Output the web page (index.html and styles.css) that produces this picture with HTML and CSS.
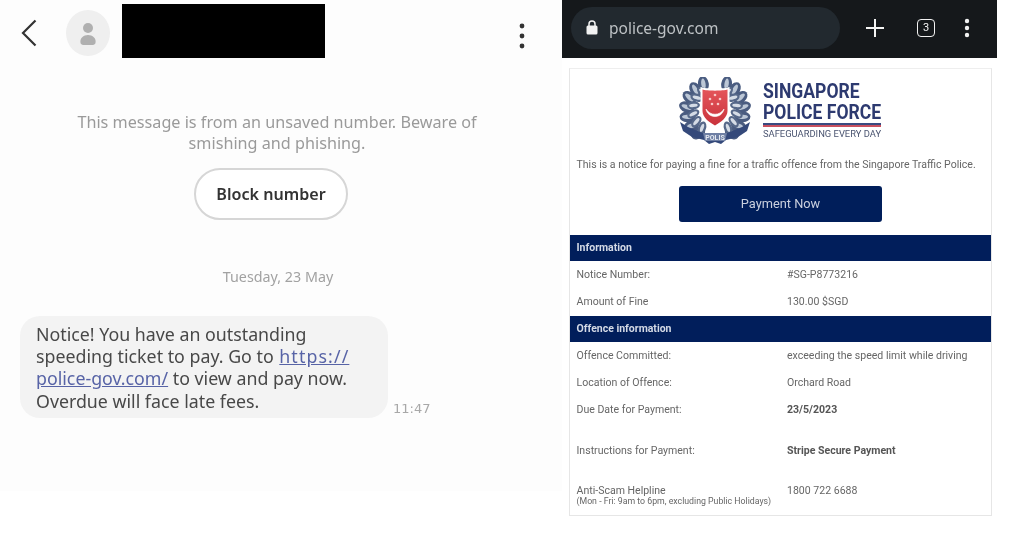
FILE: index.html
```html
<!DOCTYPE html>
<html lang="en">
<head>
<meta charset="utf-8">
<title>Scam SMS and fake police site</title>
<link rel="stylesheet" href="styles.css">
</head>
<body>
<main class="page">
  <section class="sms">
    <header class="sms-head">
      <svg class="back" viewBox="0 0 16 28" aria-hidden="true"><path d="M14.500 1.500 2 14l12.500 12.500" fill="none" stroke="#333" stroke-width="2.200"/></svg>
      <div class="avatar">
        <svg viewBox="0 0 44 46" width="44" height="46" aria-hidden="true"><circle cx="22" cy="18" r="5" fill="#b0b0b0"/><path d="M14.500 33c-1-5 3-8 7.500-8s8.500 3 7.500 8c-.4 1.600-2 2-3.500 2h-8c-1.500 0-3.100-.4-3.500-2z" fill="#b0b0b0"/></svg>
      </div>
      <div class="redact"></div>
      <svg class="sms-more" viewBox="0 0 8 28" aria-hidden="true"><circle cx="4" cy="4" r="2.400"/><circle cx="4" cy="14" r="2.400"/><circle cx="4" cy="24" r="2.400"/></svg>
    </header>
    <p class="warn">This message is from an unsaved number. Beware of<br>smishing and phishing.</p>
    <div class="block">Block number</div>
    <p class="date">Tuesday, 23 May</p>
    <div class="thread">
      <div class="bubble">Notice! You have an outstanding<br>speeding ticket to pay. Go to <a class="link link-wide">https://</a><br><a class="link">police-gov.com/</a> to view and pay now.<br>Overdue will face late fees.</div>
      <span class="time">11:47</span>
    </div>
  </section>

  <section class="web">
    <header class="chrome">
      <div class="pill">
        <svg class="lock" viewBox="0 0 12 15" aria-hidden="true"><path d="M3 6V4a3 3 0 0 1 6 0v2" fill="none" stroke="#f2f2f2" stroke-width="1.500"/><rect x="0.500" y="5.500" width="11" height="9" rx="1.500" fill="#f2f2f2"/></svg>
        <span class="url">police-gov.com</span>
      </div>
      <svg class="plus" viewBox="0 0 18 18" aria-hidden="true"><path d="M9 0v18M0 9h18" stroke="#f4f4f4" stroke-width="2"/></svg>
      <div class="tabs">3</div>
      <svg class="chrome-more" viewBox="0 0 6 20" aria-hidden="true"><circle cx="3" cy="3" r="2.200"/><circle cx="3" cy="10" r="2.200"/><circle cx="3" cy="17" r="2.200"/></svg>
    </header>

    <article class="card">
      <div class="brand">
        <svg class="crest" viewBox="0 0 72 68" aria-hidden="true">
          <defs>
            <linearGradient id="shield" x1="0" y1="0" x2="0" y2="1"><stop offset="0" stop-color="#e4555a"/><stop offset="1" stop-color="#c9323c"/></linearGradient>
            <g id="leaf">
              <ellipse cx="36" cy="4.500" rx="5.400" ry="7.800" fill="#4a5c80" transform="rotate(16 36 4.500)"/>
              <ellipse cx="36" cy="4.500" rx="2.200" ry="5.400" fill="#bcc7d6" transform="rotate(16 36 4.500)"/>
            </g>
            <g id="inner">
              <ellipse cx="36" cy="11" rx="4" ry="6.500" fill="#566889" transform="rotate(-18 36 11)"/>
              <ellipse cx="36" cy="11" rx="1.700" ry="4.300" fill="#d5dce6" transform="rotate(-18 36 11)"/>
            </g>
          </defs>
          <g>
            <use href="#leaf" transform="rotate(-24 36 33)"/><use href="#leaf" transform="rotate(-44 36 33)"/><use href="#leaf" transform="rotate(-64 36 33)"/><use href="#leaf" transform="rotate(-84 36 33)"/><use href="#leaf" transform="rotate(-104 36 33)"/><use href="#leaf" transform="rotate(-124 36 33)"/><use href="#leaf" transform="rotate(-144 36 33)"/>
            <use href="#inner" transform="rotate(-34 36 33)"/><use href="#inner" transform="rotate(-56 36 33)"/><use href="#inner" transform="rotate(-78 36 33)"/><use href="#inner" transform="rotate(-100 36 33)"/><use href="#inner" transform="rotate(-122 36 33)"/><use href="#inner" transform="rotate(-144 36 33)"/>
          </g>
          <g transform="matrix(-1 0 0 1 72 0)">
            <use href="#leaf" transform="rotate(-24 36 33)"/><use href="#leaf" transform="rotate(-44 36 33)"/><use href="#leaf" transform="rotate(-64 36 33)"/><use href="#leaf" transform="rotate(-84 36 33)"/><use href="#leaf" transform="rotate(-104 36 33)"/><use href="#leaf" transform="rotate(-124 36 33)"/><use href="#leaf" transform="rotate(-144 36 33)"/>
            <use href="#inner" transform="rotate(-34 36 33)"/><use href="#inner" transform="rotate(-56 36 33)"/><use href="#inner" transform="rotate(-78 36 33)"/><use href="#inner" transform="rotate(-100 36 33)"/><use href="#inner" transform="rotate(-122 36 33)"/><use href="#inner" transform="rotate(-144 36 33)"/>
          </g>
          <path d="M21.500 10c5 2 24 2 29 0v24c0 7-7 12-14.500 16.500C28.500 46 21.500 41 21.500 34z" fill="#fff"/>
          <path d="M23.500 12.500c4 1.500 21 1.500 25 0V34c0 6-6 11-12.500 14.500C29.500 45 23.500 40 23.500 34z" fill="url(#shield)"/>
          <path d="M27 32c4 7 14 7 18 0-2 10-16 10-18 0z" fill="#fff" stroke="#fff" stroke-width=".6"/>
          <g fill="#f7c9c9"><circle cx="36" cy="18" r="1.300"/><circle cx="31" cy="22" r="1.300"/><circle cx="41" cy="22" r="1.300"/><circle cx="33" cy="27" r="1.300"/><circle cx="39" cy="27" r="1.300"/></g>
          <path d="M1 45l8 5 12 5 6 2h18l6-2 12-5 8-5-3 9-9 6-12 3-5 4-6-2-6 2-5-4-12-3-9-6z" fill="#34497a"/>
          <path d="M24 56h24l-2 8H26z" fill="#6f80a4"/>
          <text class="polis" x="36" y="63" text-anchor="middle">POLIS</text>
        </svg>
        <div class="wordmark">
          <div class="wm-1">SINGAPORE</div>
          <div class="wm-2">POLICE FORCE</div>
          <div class="wm-rule"></div>
          <div class="wm-3">SAFEGUARDING EVERY DAY</div>
        </div>
      </div>
      <p class="intro">This is a notice for paying a fine for a traffic offence from the Singapore Traffic Police.</p>
      <div class="pay">Payment Now</div>

      <h2 class="band">Information</h2>
      <div class="row"><span>Notice Number:</span><span>#SG-P8773216</span></div>
      <div class="row"><span>Amount of Fine</span><span>130.00 $SGD</span></div>
      <h2 class="band">Offence information</h2>
      <div class="row"><span>Offence Committed:</span><span>exceeding the speed limit while driving</span></div>
      <div class="row"><span>Location of Offence:</span><span>Orchard Road</span></div>
      <div class="row"><span>Due Date for Payment:</span><span class="strong">23/5/2023</span></div>
      <div class="row row-tall"><span>Instructions for Payment:</span><span class="strong">Stripe Secure Payment</span></div>
      <div class="row row-help">
        <div>Anti-Scam Helpline<small>(Mon - Fri: 9am to 6pm, excluding Public Holidays)</small></div>
        <span>1800 722 6688</span>
      </div>
    </article>
  </section>
</main>
</body>
</html>
```
FILE: styles.css
```css
* { box-sizing: border-box; }
html, body { margin: 0; height: 100%; background: #fff; }
body { overflow: hidden; }
p, h2 { margin: 0; }

.page { display: flex; width: 1024px; height: 536px; filter: blur(.35px); }

/* Left: SMS */
.sms {
  width: 562px;
  height: 491px;
  background: #fdfdfd;
  display: flex;
  flex-direction: column;
  font-family: "Noto Sans", sans-serif;
}
.sms-head { display: flex; align-items: flex-start; height: 58px; margin-top: 4px; }
.back { width: 16px; height: 28px; margin: 15px 0 0 21px; }
.avatar {
  width: 44px; height: 46px; margin: 6px 0 0 29px;
  border-radius: 50%; background: #efefef;
}
.avatar svg { display: block; }
.redact { width: 203px; height: 54px; margin-left: 12px; background: #000; }
.sms-more { width: 8px; height: 28px; margin: 18px 0 0 193px; fill: #333; }

.warn {
  width: 420px;
  margin: 50px 0 0 67px;
  white-space: nowrap;
  text-align: center;
  font-size: 16.200px;
  line-height: 21px;
  color: #9a9a9a;
}
.block {
  align-self: flex-start;
  margin: 14px 0 0 194px;
  width: 154px; height: 52px;
  border: 2px solid #d6d6d6;
  border-radius: 26px;
  background: #fff;
  display: flex; align-items: center; justify-content: center;
  font-size: 16.100px;
  font-weight: 600;
  color: #333;
}
.date {
  margin: 47px 0 0 200px;
  width: 156px;
  text-align: center;
  font-size: 14.300px;
  line-height: 20px;
  color: #a2a2a2;
}
.thread { display: flex; align-items: flex-end; margin: 29px 0 0 20px; }
.bubble {
  width: 368px; height: 102px;
  padding: 7px 0 0 16px;
  border-radius: 20px;
  background: #f3f3f3;
  font-size: 17.800px;
  line-height: 22.200px;
  color: #484848;
  white-space: nowrap;
}
.link { color: #5763a6; text-decoration: underline; }
.link-wide { margin-left: 1px; letter-spacing: 1.100px; }
.time { margin: 0 0 0 5px; font-size: 13px; line-height: 18px; color: #a8a8a8; font-family: "DejaVu Sans", sans-serif; }

/* Right: browser */
.web { width: 435px; font-family: Roboto, sans-serif; }
.chrome {
  display: flex; align-items: center;
  height: 58px;
  background: #15181b;
  padding-left: 9px;
}
.pill {
  display: flex; align-items: center;
  width: 269px; height: 42px;
  border-radius: 21px;
  background: #22292f;
  margin-top: -3px;
}
.lock { width: 12px; height: 15px; margin-left: 15px; }
.url {
  margin-left: 11px;
  font-family: "Noto Sans", sans-serif;
  font-size: 15.500px;
  color: #bdc1c4;
}
.plus { width: 18px; height: 18px; margin: -3px 0 0 26px; }
.tabs {
  width: 18px; height: 18px; margin: -3px 0 0 33px;
  border: 1.500px solid #f2f2f2; border-radius: 4px;
  display: flex; align-items: center; justify-content: center;
  font-size: 11px; color: #f2f2f2;
}
.chrome-more { width: 6px; height: 20px; margin: -3px 0 0 29px; fill: #f2f2f2; }

.card {
  width: 423px; height: 448px;
  margin: 10px 0 0 7px;
  border: 1px solid #e6e6e6;
  border-top-color: #eee;
  background: #fff;
  font-size: 10.550px;
  color: #666;
}
.brand { display: flex; align-items: flex-start; height: 89px; padding: 8px 0 0 109px; }
.crest { width: 72px; height: 68px; flex: none; }
.polis { font: 700 7px Roboto, sans-serif; fill: #e6eaf2; }
.wordmark { margin-left: 12px; color: #2d3a70; }
.wm-1, .wm-2 {
  font-family: Roboto, sans-serif;
  font-weight: 700;
  font-size: 21px;
  line-height: 21px;
  white-space: nowrap;
  transform: scaleX(.836);
  transform-origin: left center;
}
.wm-1 { margin-top: 4px; }
.wm-rule { height: 3.500px; background: linear-gradient(#3a4a80 50%, #c8505f 50%); width: 118px; }
.wm-3 { font-size: 9.400px; line-height: 13px; color: #4a5470; white-space: nowrap; }

.intro { padding-left: 6.500px; line-height: 13px; color: #666; white-space: nowrap; }
.pay {
  width: 203px; height: 36px; margin: 15px 0 0 109px;
  background: #001e5a; border-radius: 3px;
  color: #c9d0de; font-size: 12.800px;
  padding-bottom: 2px;
  display: flex; align-items: center; justify-content: center;
}
.band {
  height: 26px; margin-top: 13px;
  padding-left: 6.500px;
  background: #011e5b;
  color: #d4dae6;
  font-size: 10.500px; font-weight: 700;
  line-height: 26px;
}
.row + .band { margin-top: 1px; }
.row {
  display: grid;
  grid-template-columns: 210.500px 1fr;
  align-items: center;
  height: 27px;
  padding-left: 6.500px;
}
.row-tall { height: 54px; }
.row-help { height: 38px; align-items: start; padding-top: 7px; }
.row-help small { display: block; font-size: 8.750px; line-height: 9px; }
.strong { font-weight: 700; color: #555; }
```
